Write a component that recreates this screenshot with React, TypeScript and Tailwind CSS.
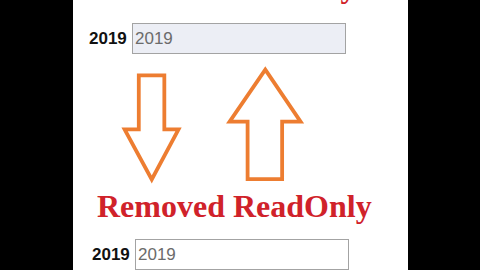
import React from "react";

const sans = { fontFamily: '"Liberation Sans", Arial, sans-serif' };
const serif = { fontFamily: '"Liberation Serif", "Times New Roman", serif' };

function YearRow({
  readOnly,
  className,
}: {
  readOnly?: boolean;
  className?: string;
}) {
  return (
    <div className={`flex items-center ${className ?? ""}`} style={sans}>
      <span className="w-[37px] text-[17px] font-bold leading-none text-[#111]">
        2019
      </span>
      <input
        readOnly={readOnly}
        defaultValue="2019"
        className={`ml-[6px] h-[31px] w-[214px] border border-[#a3a3a3] px-[2px] text-[17px] text-[#6b6b6b] outline-none ${
          readOnly ? "bg-[#eceef5]" : "bg-white"
        }`}
      />
    </div>
  );
}

function Arrows() {
  return (
    <svg
      width="335"
      height="130"
      viewBox="0 0 335 130"
      fill="none"
      stroke="#ed7d31"
      strokeWidth="4"
      strokeLinejoin="miter"
      className="mt-[10px] block"
    >
      <polygon points="60,12 87,12 87,69 102,69 73.7,122 45,69 60,69" />
      <polygon points="193.7,6 231,61 211.5,61 211.5,121.7 175,121.7 175,61 156,61" />
    </svg>
  );
}

export default function App() {
  return (
    <div className="flex h-[270px] w-[480px] overflow-hidden bg-black">
      <div className="ml-[73px] flex h-full w-[335px] flex-col bg-white">
        <p
          className="-mt-[30px] h-[32px] whitespace-nowrap pl-[46px] text-[32px] font-bold leading-[32px] text-[#d0222a]"
          style={serif}
        >
          Added ReadOnly
        </p>
        <YearRow readOnly className="ml-[16px] mt-[21px]" />
        <Arrows />
        <p
          className="mt-[3px] h-[32px] whitespace-nowrap pl-[24px] text-[32px] font-bold leading-[32px] text-[#d0222a]"
          style={serif}
        >
          Removed ReadOnly
        </p>
        <YearRow className="ml-[19px] mt-[17px]" />
      </div>
    </div>
  );
}
